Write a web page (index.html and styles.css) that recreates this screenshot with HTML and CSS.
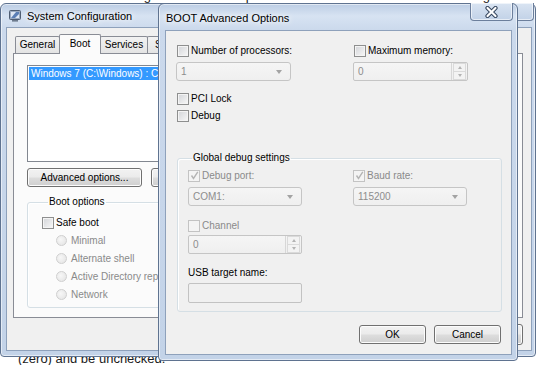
FILE: index.html
```html
<!DOCTYPE html>
<html lang="en">
<head>
<meta charset="utf-8">
<title>BOOT Advanced Options</title>
<link rel="stylesheet" href="styles.css">
</head>
<body>
<div class="doc">
  <p class="docline first">will then need to change the number of processors that are enabled for use during the boot process by the system</p>
  <p class="docline last">(zero) and be unchecked.</p>
</div>

<section class="window syscfg">
  <header class="titlebar">
    <svg class="appicon" width="12" height="12" viewBox="0 0 12 12" aria-hidden="true">
      <rect x="0.5" y="0.5" width="11" height="9" rx="1" fill="#9aaac0" stroke="#4e5d72"/>
      <rect x="2" y="2" width="8" height="6" fill="#dfe8f4"/>
      <path d="M2 8 L7 2 L10 2 L10 4 L6 8 Z" fill="#5b7fb5"/>
      <rect x="3" y="10" width="6" height="1.6" fill="#6d7b8e"/>
    </svg>
    <span class="title">System Configuration</span>
    <span class="closebtn" aria-hidden="true"></span>
  </header>
  <div class="client">
    <nav class="tabs">
      <span class="tab t-general">General</span>
      <span class="tab active t-boot">Boot</span>
      <span class="tab t-services">Services</span>
      <span class="tab t-startup">Startup</span>
      <span class="tab t-tools">Tools</span>
    </nav>
    <div class="tabpanel">
      <div class="listbox">
        <div class="lbitem selected">Windows 7 (C:\Windows) : Current OS; Default OS</div>
      </div>
      <div class="btnrow">
        <button class="btn btn-adv">Advanced options...</button>
        <button class="btn btn-mid">Set as default</button>
        <button class="btn btn-mid">Delete</button>
      </div>
      <fieldset class="group bootopts">
        <legend>Boot options</legend>
        <label class="check"><span class="cb"></span>Safe boot</label>
        <div class="radios">
          <label class="radio"><span class="rb"></span>Minimal</label>
          <label class="radio"><span class="rb"></span>Alternate shell</label>
          <label class="radio"><span class="rb"></span>Active Directory repair</label>
          <label class="radio"><span class="rb"></span>Network</label>
        </div>
      </fieldset>
    </div>
    <div class="footer">
      <button class="btn fbtn">OK</button>
      <button class="btn fbtn">Cancel</button>
      <button class="btn fbtn">Apply</button>
      <button class="btn fbtn">Help</button>
    </div>
  </div>
</section>

<section class="window dialog">
  <header class="titlebar">
    <span class="title">BOOT Advanced Options</span>
    <span class="closebtn">
      <svg width="13" height="12" viewBox="0 0 13 12" aria-hidden="true">
        <path d="M2.5 2 L10.5 10 M10.5 2 L2.5 10" stroke="#33445c" stroke-width="4.2" stroke-linecap="round"/>
        <path d="M2.5 2 L10.5 10 M10.5 2 L2.5 10" stroke="#ffffff" stroke-width="2.2" stroke-linecap="round"/>
      </svg>
    </span>
  </header>
  <div class="client">
    <div class="cols">
      <div class="field">
        <label class="check"><span class="cb"></span>Number of processors:</label>
        <div class="combo disabled"><span class="val">1</span><span class="arrow"></span></div>
      </div>
      <div class="field">
        <label class="check"><span class="cb"></span>Maximum memory:</label>
        <div class="spin disabled"><span class="val">0</span><span class="spinbtns"><span class="up"></span><span class="down"></span></span></div>
      </div>
    </div>
    <div class="opts">
      <label class="check"><span class="cb"></span>PCI Lock</label>
      <label class="check"><span class="cb"></span>Debug</label>
    </div>
    <fieldset class="group debuggrp">
      <legend>Global debug settings</legend>
      <div class="gcols">
        <div class="field">
          <label class="check dis"><span class="cb checked"><svg width="9" height="9" viewBox="0 0 9 9"><path d="M1.5 4.5 L3.5 7.5 L7.8 0.8" fill="none" stroke="#b4b4b4" stroke-width="1.4"/></svg></span>Debug port:</label>
          <div class="combo disabled"><span class="val">COM1:</span><span class="arrow"></span></div>
        </div>
        <div class="field">
          <label class="check dis"><span class="cb checked"><svg width="9" height="9" viewBox="0 0 9 9"><path d="M1.5 4.5 L3.5 7.5 L7.8 0.8" fill="none" stroke="#b4b4b4" stroke-width="1.4"/></svg></span>Baud rate:</label>
          <div class="combo disabled"><span class="val">115200</span><span class="arrow"></span></div>
        </div>
        <div class="field chan">
          <label class="check dis"><span class="cb dcb"></span>Channel</label>
          <div class="spin disabled"><span class="val">0</span><span class="spinbtns"><span class="up"></span><span class="down"></span></span></div>
        </div>
        <div class="field usb">
          <span class="plain">USB target name:</span>
          <div class="textbox disabled"></div>
        </div>
      </div>
    </fieldset>
    <div class="dfooter">
      <button class="btn dbtn">OK</button>
      <button class="btn dbtn">Cancel</button>
    </div>
  </div>
</section>
</body>
</html>
```
FILE: styles.css
```css
* { box-sizing: border-box; margin: 0; padding: 0; }
html, body { width: 540px; height: 365px; overflow: hidden; background: #fff; }
body { position: relative; display: flow-root; font-family: "Liberation Sans", Arial, sans-serif; font-size: 10px; color: #000; }

/* page text behind the windows */
.doc { height: 365px; display: flex; flex-direction: column; justify-content: space-between; overflow: hidden; font-size: 13px; line-height: 19px; white-space: nowrap; color: #1a1a1a; }
.docline { padding-left: 18px; }
.docline.first { margin-top: -14px; }
.docline.last { margin-bottom: -3px; }

/* windows on the desktop */
.window {
  position: absolute;
  display: flex;
  flex-direction: column;
  border: 1px solid #5f7390;
  border-radius: 6px 6px 4px 4px;
  background: linear-gradient(180deg, #bccde4 0, #d7e3f2 12px, #cbd9ec 26px, #c3d3e8 100%);
  box-shadow: inset 0 0 0 1px rgba(255,255,255,.55);
}
.syscfg { z-index: 1; left: 0; top: 3px; width: 536px; height: 354px; padding: 0 3px 5px 5px; }
.dialog { z-index: 2; left: 158px; top: 3px; width: 360px; height: 358px; padding: 0 5px 5px 6px; }

.titlebar { display: flex; align-items: center; flex: none; }
.syscfg .titlebar { height: 23px; }
.dialog .titlebar { height: 26px; }
.title { font-size: 11px; color: #000; text-shadow: 0 0 5px #fff, 0 0 8px #fff; padding-top: 1px; }
.dialog .title { padding-left: 1px; padding-top: 2px; }
.appicon { margin: 0 6px 0 3px; flex: none; }

.closebtn {
  margin-left: auto;
  align-self: flex-start;
  margin-top: -1px;
  margin-right: -1px;
  width: 43px;
  height: 18px;
  border: 1px solid #6c7f9c;
  border-top: none;
  border-radius: 0 0 4px 4px;
  background: linear-gradient(#d9e4f2, #c2d2e7);
  box-shadow: inset 0 0 0 1px rgba(255,255,255,.6);
  display: flex;
  align-items: center;
  justify-content: center;
}
.syscfg .closebtn { margin-right: -2px; }

.client {
  flex: 1;
  border: 1px solid #8ea1bb;
  background: #f0f0f0;
  display: flex;
  flex-direction: column;
}

/* tabs */
.tabs { display: flex; align-items: flex-end; height: 20px; margin-top: 6px; padding-left: 8px; position: relative; z-index: 1; flex: none; }
.tab {
  height: 17px;
  margin-bottom: 1px;
  border: 1px solid #898c95;
  border-bottom: none;
  border-radius: 2px 2px 0 0;
  background: linear-gradient(#f2f2f2, #e4e4e4);
  display: flex;
  align-items: center;
  justify-content: center;
  padding-bottom: 1px;
}
.tab + .tab { margin-left: -1px; }
.tab.active { height: 20px; margin-bottom: 0; background: #fbfbfb; position: relative; z-index: 2; padding-bottom: 3px; }
.t-general { width: 45px; }
.t-boot { width: 42px; }
.t-services { width: 48px; }
.t-startup { width: 48px; }
.t-tools { width: 36px; }

.tabpanel {
  flex: none;
  height: 265px;
  margin: -1px 8px 0 6px;
  border: 1px solid #898c95;
  background: #fbfbfb;
  padding: 11px 0 0 13px;
  display: flex;
  flex-direction: column;
  align-items: flex-start;
}
.listbox { width: 420px; height: 97px; border: 1px solid #828790; background: #fff; padding: 1px; }
.lbitem { height: 13px; line-height: 13px; padding-left: 2px; }
.lbitem.selected { background: #3399ff; color: #fff; }

.btnrow { display: flex; gap: 9px; margin-top: 6px; }

.btn {
  font-family: inherit;
  font-size: 10px;
  color: #000;
  height: 19px;
  border: 1px solid #707070;
  border-radius: 3px;
  background: linear-gradient(#f2f2f2 0%, #ebebeb 48%, #dddddd 52%, #cfcfcf 100%);
  box-shadow: inset 0 0 0 1px #fcfcfc;
  display: flex;
  align-items: center;
  justify-content: center;
}
.btn-adv { width: 115px; }
.btn-mid { width: 90px; }

/* group boxes */
.group { border: 1px solid #d5dfe5; border-radius: 3px; box-shadow: 1px 1px 0 #fff inset; }
.group legend { line-height: 12px; height: 12px; padding: 0 1px; }

.bootopts { width: 245px; margin-top: 9px; padding: 8px 0 6px 14px; }
.bootopts legend { margin-left: 6px; }
.radios { display: flex; flex-direction: column; gap: 5px; margin-top: 5px; padding-left: 14px; }

.check, .radio { display: flex; align-items: center; height: 13px; gap: 2px; white-space: nowrap; }
.radio { color: #8a8a8a; gap: 4px; }
.check.dis { color: #8a8a8a; }

.cb {
  width: 12px; height: 12px; flex: none;
  border: 1px solid #8e8f8f;
  background: linear-gradient(135deg, #d2d4d8, #f8f8f8);
  box-shadow: inset 0 0 0 1px #f4f4f4;
  display: flex; align-items: center; justify-content: center;
}
.cb.checked, .cb.dcb { border-color: #c3c3c3; background: #f4f4f4; box-shadow: none; }
.rb {
  width: 11px; height: 11px; flex: none;
  border: 1px solid #cfcfcf;
  border-radius: 50%;
  background: radial-gradient(circle at 40% 40%, #f7f7f7, #e2e2e2);
}

.footer { display: flex; justify-content: flex-end; gap: 6px; margin-top: 6px; padding-right: 8px; }
.fbtn { width: 70px; height: 21px; }

/* dialog content */
.dialog .client { padding: 13px 0 0 10px; }
.cols { display: grid; grid-template-columns: 115px 115px; column-gap: 62px; }
.field { display: flex; flex-direction: column; gap: 5px; }
.field > .check { margin-left: 1px; }
.gcols .field > .check { margin-left: 0; }

.combo, .spin, .textbox {
  height: 19px;
  border: 1px solid #c5c5c5;
  border-radius: 3px;
  background: linear-gradient(#f5f5f5, #efefef);
  display: flex;
  align-items: center;
  color: #8d8d8d;
}
.val { padding-left: 4px; flex: 1; }
.arrow { width: 0; height: 0; border-left: 3.5px solid transparent; border-right: 3.5px solid transparent; border-top: 4px solid #a3a3a3; margin-right: 8px; }
.spin { border-radius: 2px; }
.spinbtns { width: 15px; height: 17px; display: flex; flex-direction: column; border-left: 1px solid #d7d7d7; margin-right: 1px; }
.spinbtns span { flex: 1; display: flex; align-items: center; justify-content: center; border: 1px solid #dadada; margin: 0 0 0 1px; background: #f3f3f3; }
.spinbtns .up { border-bottom: none; }
.spinbtns .up::before { content: ""; border-left: 2.5px solid transparent; border-right: 2.5px solid transparent; border-bottom: 3px solid #b3b3b3; }
.spinbtns .down::before { content: ""; border-left: 2.5px solid transparent; border-right: 2.5px solid transparent; border-top: 3px solid #b3b3b3; }
.textbox { height: 20px; border-color: #c2c2c2; border-radius: 2px; background: #f0f0f0; }

.opts { display: flex; flex-direction: column; gap: 4px; margin-top: 11px; margin-left: 1px; }

.debuggrp { width: 325px; margin: 30px 0 0 1px; padding: 5px 0 8px 10px; }
.debuggrp legend { margin-left: 4px; }
.gcols { display: grid; grid-template-columns: 114px 114px; column-gap: 51px; row-gap: 13px; }
.chan { grid-column: 1; gap: 3px; }
.usb { grid-column: 1; gap: 4px; }
.plain { height: 12px; line-height: 12px; }

.dfooter { display: flex; justify-content: flex-end; gap: 8px; margin-top: 13px; padding-right: 10px; }
.dbtn { width: 67px; }
```
